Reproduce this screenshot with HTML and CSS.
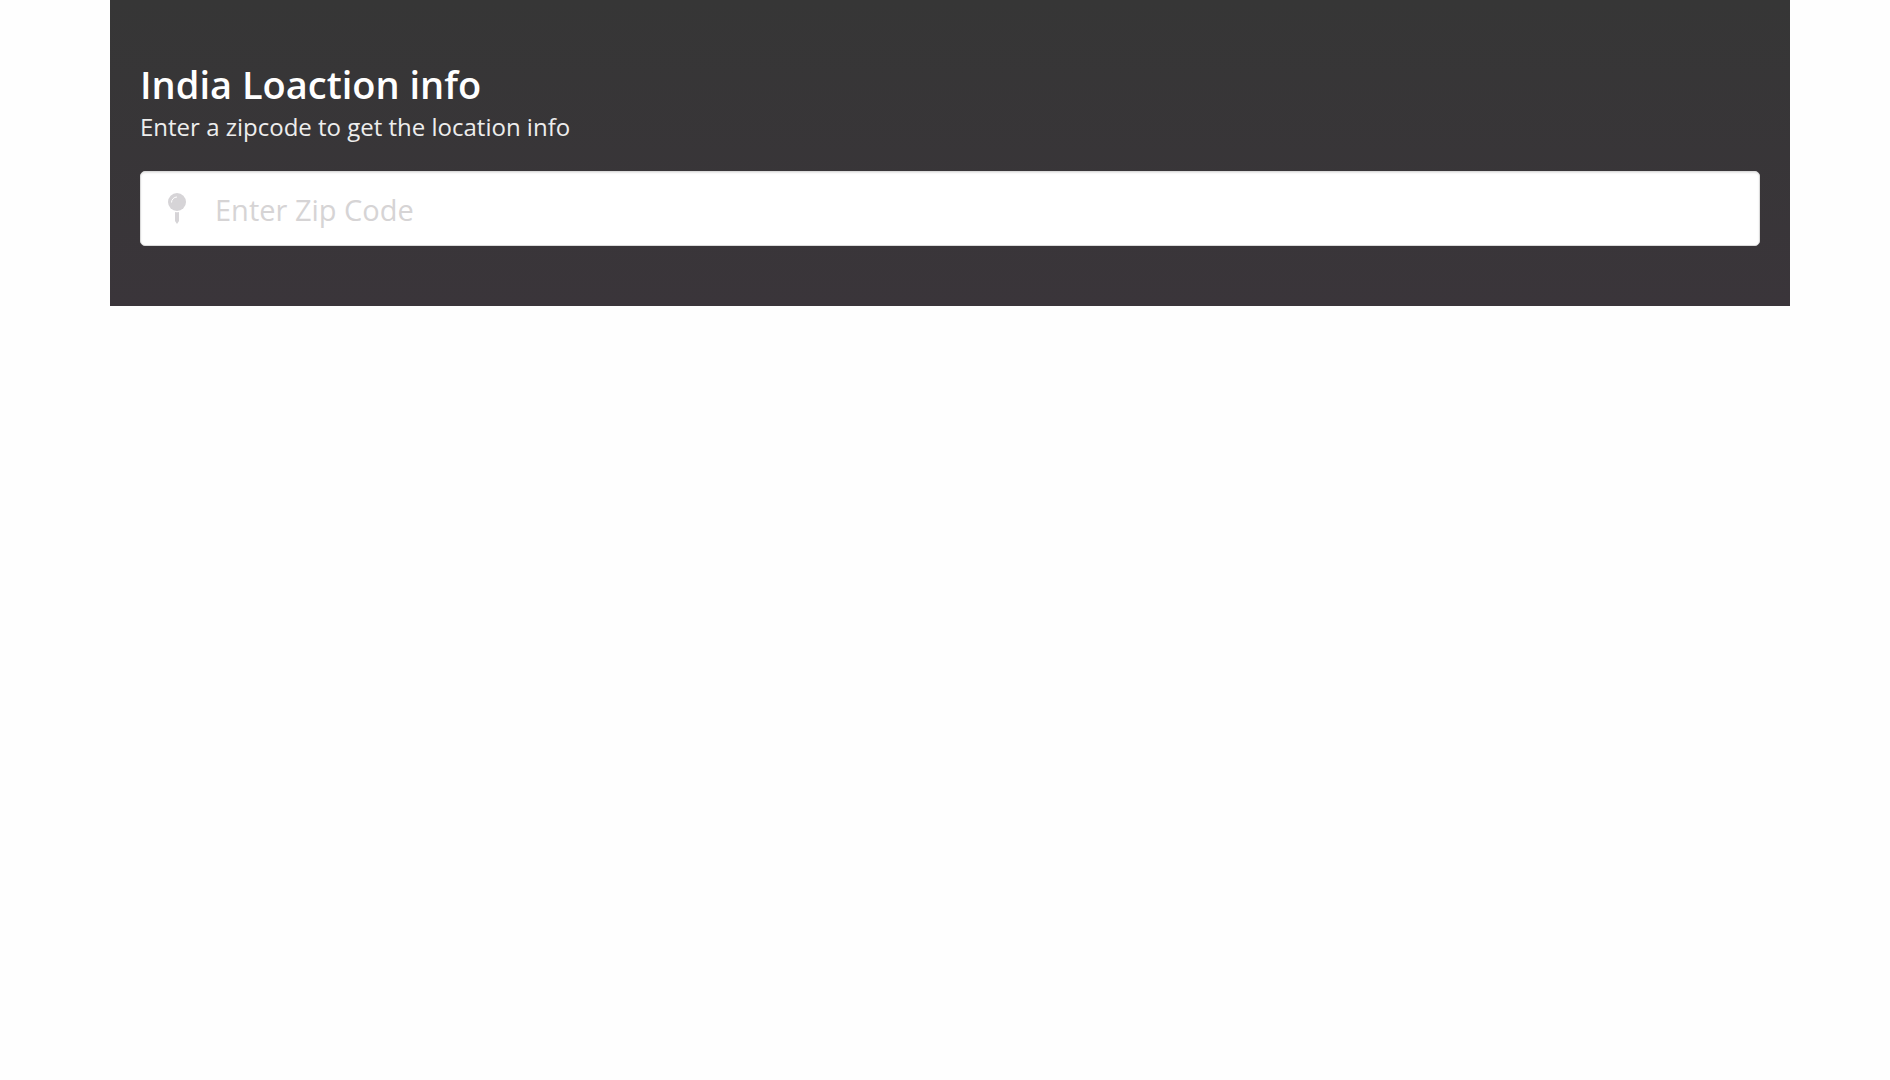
FILE: index.html
```html
<!DOCTYPE html>
<html lang="en">
<head>
	<meta charset="utf-8">
	<meta name="viewport" content="width=device-width, initial-scale=1.0">
	<title>India Loaction info</title>
	<link rel="stylesheet" href="styles.css">
</head>
<body>
	<div class="container">
		<section class="hero">
			<h1 class="title">India Loaction info</h1>
			<p class="subtitle"><label for="zip">Enter a zipcode to get the location info</label></p>
			<form id="zipForm" class="control">
				<input type="text" id="zip" class="input" placeholder="Enter Zip Code">
				<span class="icon">
					<svg width="18" height="32" viewBox="0 0 18 32" aria-hidden="true">
						<circle cx="9" cy="9" r="9"/>
						<path d="M7 19 Q9 19.600 11 19 V28 L9 31 L7 28 Z"/>
						<path class="shine" d="M3.500 9.500 A5.500 5.500 0 0 1 9 4"/>
					</svg>
				</span>
			</form>
		</section>
	</div>
</body>
</html>
```
FILE: styles.css
```css
*{
	box-sizing: border-box;
}
body{
	margin: 0;
	padding-left: 10px;
	background-color: #fefefe;
	font-family: "Segoe UI", "Open Sans", "Noto Sans", sans-serif;
}
.container{
	max-width: 1680px;
	margin: 0 auto;
}
.hero{
	padding: 60px 30px;
	background: linear-gradient(#363636, #3a353a);
	color: #fff;
}
.title{
	margin: 0;
	font-size: 38px;
	font-weight: 600;
	line-height: 48px;
}
.subtitle{
	margin: 0 0 26px;
	color: #ededed;
	font-size: 24px;
	line-height: 37px;
}
.control{
	position: relative;
}
.input{
	display: block;
	width: 100%;
	height: 75px;
	padding: 2px 20px 0 74px;
	border: 1px solid #dbdbdb;
	border-radius: 5px;
	background-color: #fff;
	box-shadow: inset 0 1px 2px rgba(10, 10, 10, 0.1);
	color: #363636;
	font-family: inherit;
	font-size: 29px;
}
.input::placeholder{
	color: #d6d4d5;
	opacity: 1;
}
.input:focus{
	outline: none;
	border-color: #3273dc;
}
/* pin inside the left end of the field */
.icon{
	position: absolute;
	top: 0;
	left: 0;
	display: flex;
	align-items: center;
	justify-content: center;
	width: 74px;
	height: 75px;
	pointer-events: none;
}
.icon svg{
	fill: #d6d4d7;
}
.icon .shine{
	fill: none;
	stroke: #fff;
}
```
